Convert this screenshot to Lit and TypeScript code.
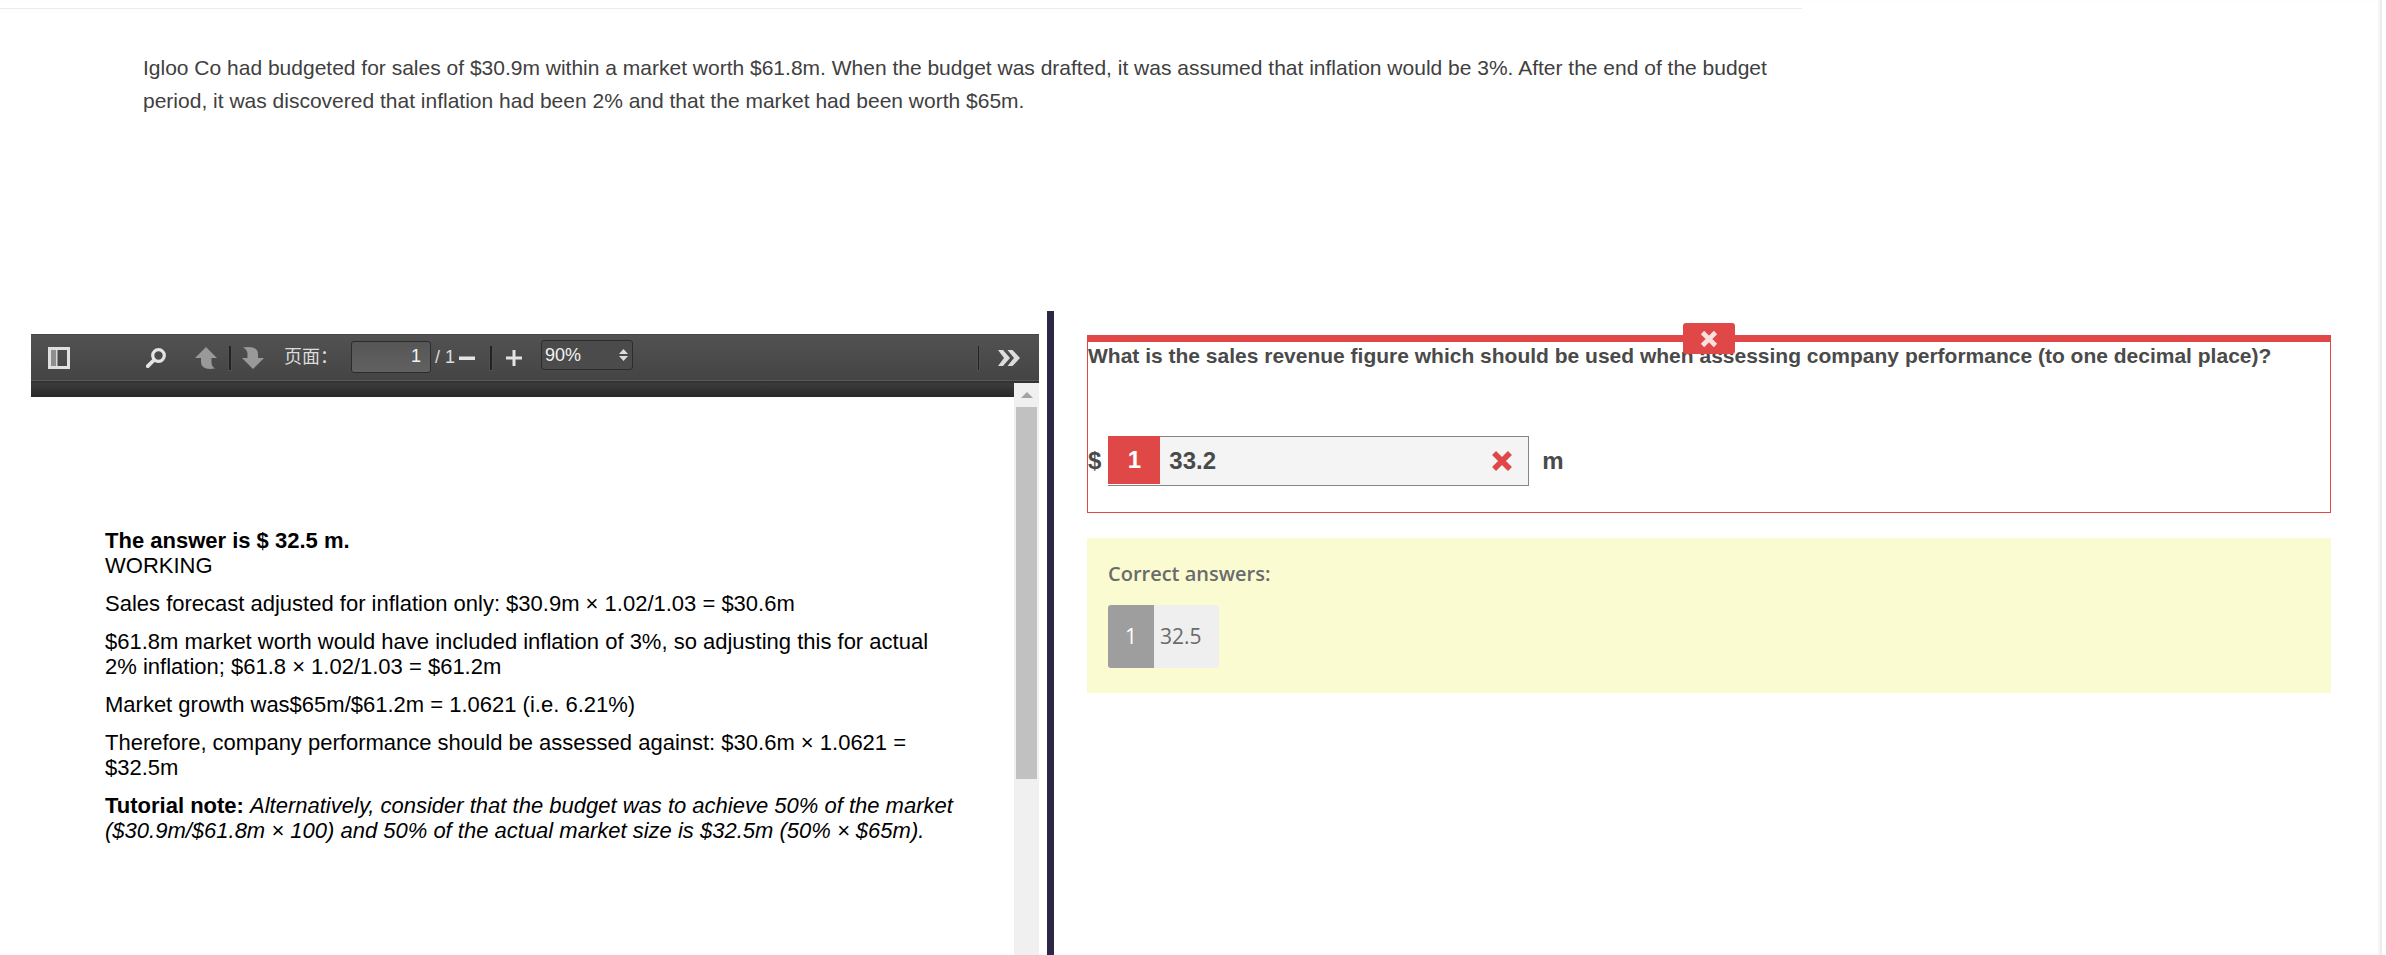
import { LitElement, html, css, svg } from "lit";
import { customElement, property, state } from "lit/decorators.js";

const cross = svg`<path d="M3.500 3.500 L16.500 16.500 M16.500 3.500 L3.500 16.500" fill="none" stroke="currentColor" stroke-width="4.600"/>`;

@customElement("pdf-toolbar")
class PdfToolbar extends LitElement {
  @property({ type: Number }) page = 1;
  @property({ type: Number }) pages = 1;

  static styles = css`
    :host {
      display: flex;
      align-items: center;
      box-sizing: border-box;
      height: 49px;
      padding: 0 19px 0 17px;
      border-bottom: 2px solid #333;
      background: linear-gradient(#525252, #444);
      box-shadow: inset 0 -1px 0 #585858, inset 0 1px 0 #474747;
      color: #dcdcdc;
      font: 18px/24px "Liberation Sans", "Noto Sans CJK SC", sans-serif;
    }
    button {
      display: flex;
      padding: 0;
      border: 0;
      background: none;
      color: #e4e4e4;
    }
    svg {
      display: block;
    }
    .find {
      margin: 0 29px 0 76px;
    }
    .sep {
      width: 2px;
      height: 24px;
      margin: 0 11px 0 12px;
      background: #222;
      box-shadow: 0 0 0 1px #505050;
    }
    .sep.wide {
      margin: 0 14px 0 15px;
    }
    .sep.end {
      width: 1px;
      margin: 0 19px 0 auto;
    }
    .fields {
      display: flex;
      align-items: center;
      padding-bottom: 2px;
    }
    .label {
      width: 67px;
      margin-left: 20px;
      white-space: nowrap;
    }
    input,
    select {
      box-sizing: border-box;
      margin: 0;
      border: 1px solid #2c2c2c;
      border-radius: 3px;
      color: #f2f2f2;
      font: inherit;
    }
    input {
      width: 80px;
      height: 32px;
      padding: 0 9px;
      background: linear-gradient(#565656, #616161);
      text-align: right;
    }
    .count {
      margin: 0 4px;
      white-space: nowrap;
    }
    .zoom {
      position: relative;
      margin-left: 19px;
      padding-bottom: 6px;
    }
    .zoom svg {
      position: absolute;
      top: 9px;
      right: 5px;
      pointer-events: none;
    }
    select {
      display: block;
      width: 92px;
      height: 30px;
      padding: 0 3px;
      appearance: none;
      background: #4b4b4b;
    }
  `;

  render() {
    return html`
      <button aria-label="Toggle sidebar">
        <svg width="22" height="22" viewBox="0 0 22 22">
          <path d="M0 0H22V22H0Z M3 3V19H19V3Z" fill="#e0e0e0" fill-rule="evenodd" />
          <path d="M3 3H8V19H3Z" fill="#8f8f8f" />
          <path d="M8 3H9.500V19H8Z" fill="#d8d8d8" />
        </svg>
      </button>
      <button class="find" aria-label="Find">
        <svg width="20" height="20" viewBox="0 0 20 20" fill="none" stroke="currentColor">
          <circle cx="12.500" cy="7.500" r="5.800" stroke-width="3.200" />
          <path d="M8 12 L1.800 18.200" stroke-width="3.800" stroke-linecap="round" />
        </svg>
      </button>
      <button aria-label="Previous page">
        <svg width="22" height="22" viewBox="0 0 22 22" fill="#999">
          <path d="M11 0 L22 11 H16.500 V15 Q16.500 19.500 20 21.500 Q6 23.500 6 15 V11 H0 Z" />
        </svg>
      </button>
      <span class="sep"></span>
      <button aria-label="Next page">
        <svg width="22" height="22" viewBox="0 0 22 22" fill="#999">
          <path d="M11 22 L0 11 H5.500 V7 Q5.500 2.500 1 .5 Q16 -1.500 16 7 V11 H22 Z" />
        </svg>
      </button>
      <div class="fields">
        <label class="label" for="page">页面：</label>
        <input id="page" type="text" .value=${String(this.page)} />
        <span class="count">/ ${this.pages}</span>
      </div>
      <button aria-label="Zoom out">
        <svg width="16" height="16" viewBox="0 0 16 16"><path d="M0 6.500H16V10H0Z" fill="#e4e4e4" /></svg>
      </button>
      <span class="sep wide"></span>
      <button aria-label="Zoom in">
        <svg width="16" height="16" viewBox="0 0 16 16">
          <path d="M0 6.500H6.500V0H9.500V6.500H16V9.500H9.500V16H6.500V9.500H0Z" fill="#e4e4e4" />
        </svg>
      </button>
      <div class="zoom">
        <select aria-label="Zoom">
          <option>90%</option>
        </select>
        <svg width="9" height="12" viewBox="0 0 9 12" fill="#ddd">
          <path d="M4.500 0L9 5H0Z M0 7H9L4.500 12Z" />
        </svg>
      </div>
      <span class="sep end"></span>
      <button aria-label="More tools">
        <svg width="22" height="16" viewBox="0 0 22 16" fill="#ddd">
          <path d="M0 0H5L12 8L5 16H0L6 8Z M9.500 0H14.500L22 8L14.500 16H9.500L16 8Z" />
        </svg>
      </button>
    `;
  }
}

@customElement("pdf-viewer")
class PdfViewer extends LitElement {
  static styles = css`
    :host {
      display: flex;
      flex-direction: column;
      margin-top: 23px;
    }
    .view {
      display: flex;
      flex: 1;
    }
    .sheet {
      flex: 1;
      color: #000;
      font: 22px/25px "Liberation Sans", sans-serif;
    }
    .band {
      height: 14px;
      background: linear-gradient(#3c3c3c, #282828);
    }
    .text {
      padding: 131px 52px 0 74px;
    }
    p {
      margin: 0 0 13px;
    }
    .track {
      display: flex;
      flex-direction: column;
      align-items: center;
      width: 25px;
      background: #f0f0f0;
    }
    .track svg {
      display: block;
      flex: none;
      margin: 9px 0;
    }
    .thumb {
      width: 21px;
      height: 65%;
      background: #c1c1c1;
    }
  `;

  render() {
    return html`
      <pdf-toolbar></pdf-toolbar>
      <div class="view">
        <div class="sheet">
          <div class="band"></div>
          <div class="text">
            <p><b>The answer is $ 32.5 m.</b><br />WORKING</p>
            <p>Sales forecast adjusted for inflation only: $30.9m × 1.02/1.03 = $30.6m</p>
            <p>
              $61.8m market worth would have included inflation of 3%, so adjusting this for actual
              2% inflation; $61.8 × 1.02/1.03 = $61.2m
            </p>
            <p>Market growth was$65m/$61.2m = 1.0621 (i.e. 6.21%)</p>
            <p>Therefore, company performance should be assessed against: $30.6m × 1.0621 = $32.5m</p>
            <p>
              <b>Tutorial note:</b>
              <i>Alternatively, consider that the budget was to achieve 50% of the market
                ($30.9m/$61.8m × 100) and 50% of the actual market size is $32.5m (50% × $65m).</i>
            </p>
          </div>
        </div>
        <div class="track">
          <svg width="12" height="6" viewBox="0 0 12 6"><path d="M6 0L12 6H0Z" fill="#a3a3a3" /></svg>
          <div class="thumb"></div>
        </div>
      </div>
    `;
  }
}

@customElement("question-panel")
class QuestionPanel extends LitElement {
  @state() answer = "33.2";

  static styles = css`
    :host {
      display: block;
      margin-top: 24px;
      color: #4a4a4a;
    }
    svg {
      display: block;
    }
    .box {
      position: relative;
      padding-bottom: 26px;
      border: 1px solid #e04848;
      border-top-width: 7px;
      font-family: "Liberation Sans", sans-serif;
    }
    .mark {
      position: absolute;
      top: -19px;
      left: 50%;
      display: flex;
      align-items: center;
      justify-content: center;
      width: 52px;
      height: 31px;
      margin-left: -26px;
      border-radius: 3px;
      background: #e04848;
      color: #fbe0e0;
    }
    h2 {
      margin: 0 0 68px;
      padding-top: 2px;
      font-size: 21px;
      line-height: 24px;
    }
    .row {
      display: flex;
      align-items: center;
      font-size: 24px;
      font-weight: bold;
      line-height: 28px;
    }
    .field {
      display: flex;
      align-items: center;
      box-sizing: border-box;
      width: 421px;
      height: 50px;
      margin: 0 13px 0 7px;
      border: 1px solid #868686;
      background: #f4f4f4;
    }
    .num {
      flex: none;
      align-self: flex-start;
      width: 52px;
      margin: -1px 0 0 -1px;
      background: #e04848;
      box-shadow: 0 1px 0 #fff;
      color: #fff;
      line-height: 48px;
      text-align: center;
    }
    input {
      flex: 1;
      min-width: 0;
      padding: 0 0 0 9px;
      border: 0;
      background: none;
      color: inherit;
      font: inherit;
    }
    .field svg {
      margin-right: 15px;
      color: #e04848;
    }
    .correct {
      margin-top: 25px;
      padding: 21px 21px 25px;
      background: #fbfbd2;
      color: #6b6b6b;
      font: 21px/30px "Open Sans", sans-serif;
    }
    h3 {
      margin: 0 0 16px;
      font-size: 20px;
      font-weight: 600;
      line-height: 30px;
    }
    .chip {
      display: inline-flex;
      overflow: hidden;
      border-radius: 3px;
      background: #efefef;
      line-height: 63px;
      vertical-align: top;
    }
    .index {
      width: 46px;
      background: #9e9e9e;
      color: #fff;
      text-align: center;
    }
    .value {
      padding: 0 17px 0 6px;
    }
  `;

  render() {
    return html`
      <section class="box">
        <span class="mark">
          <svg width="18" height="18" viewBox="1 1 18 18">${cross}</svg>
        </span>
        <h2>What is the sales revenue figure which should be used when assessing company performance (to one decimal place)?</h2>
        <div class="row">
          <span>$</span>
          <div class="field">
            <label class="num" for="answer">1</label>
            <input id="answer" type="text" .value=${this.answer} />
            <svg width="22" height="22" viewBox="1 1 18 18">${cross}</svg>
          </div>
          <span>m</span>
        </div>
      </section>
      <section class="correct">
        <h3>Correct answers:</h3>
        <div class="chip"><span class="index">1</span><span class="value">32.5</span></div>
      </section>
    `;
  }
}

@customElement("app-root")
class AppRoot extends LitElement {
  static styles = css`
    :host {
      display: flex;
      flex-direction: column;
      box-sizing: border-box;
      min-height: 100vh;
      margin-right: 4px;
      border-right: 2px solid #ececec;
      background: #fff;
      box-shadow: inset -2px 0 2px #f6f6f6;
    }
    .scenario {
      width: 75.700%;
      box-sizing: border-box;
      margin-top: 8px;
      padding: 42px 24px 0 143px;
      border-top: 1px solid #ebebeb;
    }
    .scenario p {
      margin: 0 0 194px;
      color: #404040;
      font: 21px/33px "Liberation Sans", sans-serif;
    }
    .split {
      display: grid;
      flex: 1;
      grid-template-columns: minmax(0, 1016fr) 7px minmax(0, 1277fr);
      padding: 0 49px 0 31px;
    }
    .divider {
      background: #2b2745;
    }
    pdf-viewer {
      margin-right: 8px;
    }
    question-panel {
      margin-left: 33px;
    }
  `;

  render() {
    return html`
      <header class="scenario">
        <p>
          Igloo Co had budgeted for sales of $30.9m within a market worth $61.8m. When the budget was drafted, it was
          assumed that inflation would be 3%. After the end of the budget period, it was discovered that inflation had
          been 2% and that the market had been worth $65m.
        </p>
      </header>
      <main class="split">
        <pdf-viewer></pdf-viewer>
        <div class="divider"></div>
        <question-panel></question-panel>
      </main>
    `;
  }
}
